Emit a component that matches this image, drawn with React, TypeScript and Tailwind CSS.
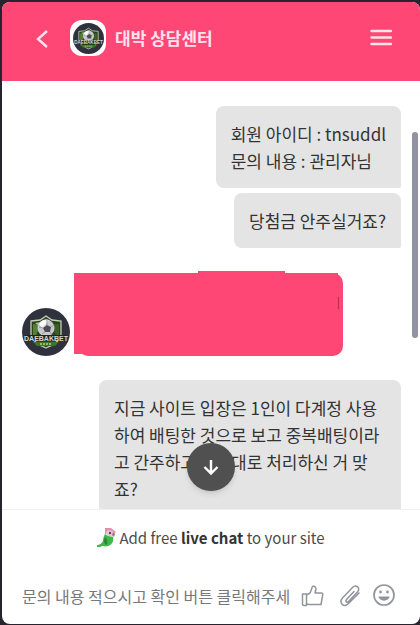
import { useState } from 'react';

interface Message {
  id: string;
  lines: string[];
}

const firstMessages: Message[] = [
  { id: 'm1', lines: ['회원 아이디 : tnsuddl', '문의 내용 : 관리자님'] },
  { id: 'm2', lines: ['당첨금 안주실거죠?'] }
];

function ClubLogo({ className = '' }: { className?: string }) {
  return (
    <svg className={className} viewBox="0 0 48 48" aria-hidden="true">
      <circle cx="24" cy="24" r="24" fill="#2f323c" />
      <path d="M9 13 18 12l6-4 6 4 9 1v15c-2 6-8 9-15 12C17 37 11 34 9 28z" fill="#2c441c" stroke="#c3cdbb" strokeWidth="1.3" />
      <path d="M11 16l8 1-5 10h-3z" fill="#577f36" />
      <path d="M37 16l-8 1 5 10h3z" fill="#3c5f25" />
      <path d="M13 15l6-1-2 4z" fill="#a9c48a" />
      <circle cx="24" cy="20" r="8.500" fill="#c9cacf" />
      <path d="M17 16a8.500 8.500 0 0 1 10-4l-3 4-4 4z" fill="#fafafa" />
      <path d="M25 17l4 2-1 5-5 0-2-4z" fill="#4b4d55" />
      <path d="M29 19l3-2M28 24l2 3M23 24l-3 2M21 20l-4-1M25 17v-5" stroke="#96989e" strokeWidth="1" />
      <path d="M3 27h42l-3 6H6z" fill="#20251f" />
      <text
        x="24"
        y="33"
        textAnchor="middle"
        fontFamily="Liberation Sans, sans-serif"
        fontSize="7"
        fontWeight="700"
        fill="#d5d8d0"
      >
        DAEBAKBET
      </text>
      <path d="M11 34h26l-4 4H15z" fill="#3e7424" />
      <path d="M18 36h12" stroke="#b5cf93" strokeWidth="1.4" strokeDasharray="2 1" />
    </svg>
  );
}

function ParrotIcon() {
  return (
    <svg className="h-5 w-5 shrink-0" viewBox="0 0 20 20" aria-hidden="true">
      <path d="M8 0h6l5 4-2 2-5-2-4 3z" fill="#e58fb0" />
      <path d="M9 4c2-3 8-2 8 2 0 3-3 4-6 3z" fill="#dccfd4" />
      <path d="M16 4l2 2-1 3-2-2z" fill="#977d8c" />
      <circle cx="13" cy="5" r="1.200" fill="#5b4650" />
      <path d="M8 6c2 2 5 3 8 3 1 4-1 8-5 9-3 1-5 0-6 0-1 1-3 1-5 1l0-2c3 0 5-2 6-4 0-3 1-5 2-7z" fill="#43b649" />
      <path d="M8 9c2 2 3 4 2 8-3-1-4-4-2-8z" fill="#268b36" />
    </svg>
  );
}

function Bubble({ lines }: { lines: string[] }) {
  return (
    <div className="max-w-[302px] rounded-l-lg rounded-tr-lg rounded-br-xs bg-[#e4e4e4] px-[15px] py-3.5 text-[17px] leading-[27px] break-all text-[#333333]">
      {lines.map(line => (
        <p key={line}>{line}</p>
      ))}
    </div>
  );
}

export default function App() {
  const [draft, setDraft] = useState('');

  return (
    <div className="h-screen bg-[#28242f] pt-0.5 pb-px pl-0.5 font-['Noto_Sans_CJK_KR',sans-serif]">
      <div className="flex h-full flex-col overflow-hidden rounded-lg bg-white">
        {/* Header */}
        <header className="flex items-center bg-[#ff4776] pt-[18px] pr-7 pb-[25px] pl-8 text-[#ffe3eb]">
          <button type="button" aria-label="Back" className="shrink-0">
            <svg className="h-5 w-4" viewBox="0 0 16 20" fill="none" stroke="currentColor" strokeWidth="2.4">
              <path d="M13 3 4 11 13 19" />
            </svg>
          </button>
          <div className="ml-5 flex h-9 w-9 shrink-0 items-center justify-center rounded-xl bg-white">
            <ClubLogo className="h-[31px] w-[31px]" />
          </div>
          <h1 className="ml-[9px] flex-1 text-[17px] leading-6 font-bold">대박 상담센터</h1>
          <button type="button" aria-label="Menu" className="shrink-0">
            <svg className="h-5 w-[22px]" viewBox="0 0 22 20" stroke="currentColor" strokeWidth="2.4" strokeLinecap="round">
              <path d="M1.500 3h19.500M1.500 9.500h19.500M1.500 16h19.500" />
            </svg>
          </button>
        </header>

        {/* Conversation */}
        <main className="relative min-h-0 flex-1 overflow-hidden">
          <div className="flex flex-col pt-[25px] pr-[19px] pl-5">
            <div className="flex flex-col items-end gap-[5px]">
              {firstMessages.map(message => (
                <Bubble key={message.id} lines={message.lines} />
              ))}
            </div>

            <div className="mt-[25px] flex items-end gap-2">
              <ClubLogo className="h-12 w-12 shrink-0" />
              <div className="relative h-[83px] w-[265px] rounded-[10px] bg-[#ff4776]">
                <span className="absolute top-0 right-[5px] bottom-0.5 -left-1 bg-[#ff4776]" />
                <span className="absolute -top-0.5 left-[120px] h-1 w-[87px] bg-[#ff4776]" />
                <span className="absolute top-6 right-1 h-3 w-px bg-[#b92c50]" />
              </div>
            </div>

            <div className="mt-6 flex justify-end">
              <Bubble
                lines={['지금 사이트 입장은 1인이 다계정 사용하여 배팅한 것으로 보고 중복배팅이라고 간주하고 규정대로 처리하신 거 맞죠?']}
              />
            </div>
          </div>

          <button
            type="button"
            aria-label="Scroll to bottom"
            className="absolute bottom-[18px] left-1/2 flex h-12 w-12 -translate-x-1/2 items-center justify-center rounded-full bg-[#505050] text-white shadow-md"
          >
            <svg className="h-5 w-5" viewBox="0 0 20 20" fill="none" stroke="currentColor" strokeWidth="2.4">
              <path d="M10 3v13M3.500 10l6.500 6.500 6.500-6.500" />
            </svg>
          </button>

          {/* Scrollbar thumb */}
          <div className="absolute top-[51px] right-0.5 h-[206px] w-1.5 rounded-full bg-[#9292a0]" />
        </main>

        {/* Footer */}
        <footer className="border-t border-[#f1f1f1]">
          <a href="#" className="flex items-center justify-center gap-0.5 pt-4 text-[15px] leading-6 text-[#4c4c4c]">
            <ParrotIcon />
            <span>
              Add free <b className="text-[#333333]">live chat</b> to your site
            </span>
          </a>
          <div className="flex items-center pt-[34px] pr-6 pb-4 pl-5 text-[#92949b]">
            <input
              type="text"
              aria-label="Message"
              value={draft}
              onChange={e => setDraft(e.target.value)}
              placeholder="문의 내용 적으시고 확인 버튼 클릭해주세"
              className="min-w-0 flex-1 text-base leading-6 text-[#333333] outline-none placeholder:text-[#77787c]"
            />
            <button type="button" aria-label="Like" className="ml-2 shrink-0">
              <svg className="h-6 w-6" viewBox="0 0 24 24" fill="none" stroke="currentColor" strokeWidth="1.5" strokeLinejoin="round">
                <path d="M2.500 10H6.500V21.500H4Q2.500 21.500 2.500 20z" />
                <path d="M6.500 11 10 9l2-5c0-3 4-2 4 1l-1 4h6c2 0 2 1 1.500 3l-1.500 8.500H9L6.500 20" />
              </svg>
            </button>
            <button type="button" aria-label="Attach file" className="ml-3.5 shrink-0">
              <svg
                className="h-6 w-6"
                viewBox="0 0 24 24"
                fill="none"
                stroke="currentColor"
                strokeWidth="1.5"
                strokeLinecap="round"
              >
                <path d="M16 7.500 8.500 15.500c-1.500 2 .5 3.500 2 2l9-9.500c3.500-4-1.500-8-5-4.500L4.500 14c-4.500 5 1.500 10 6 5.500L21 9" />
              </svg>
            </button>
            <button type="button" aria-label="Emoji" className="ml-2.5 shrink-0">
              <svg className="h-6 w-6" viewBox="0 0 24 24" fill="none" stroke="currentColor" strokeWidth="1.7">
                <circle cx="12" cy="11" r="10" />
                <path d="M6.500 12.500h11c-.5 5.500-10.500 5.500-11 0z" fill="currentColor" stroke="none" />
                <circle cx="8.500" cy="8" r="1.400" fill="currentColor" stroke="none" />
                <circle cx="15.500" cy="8" r="1.400" fill="currentColor" stroke="none" />
              </svg>
            </button>
          </div>
        </footer>
      </div>
    </div>
  );
}
